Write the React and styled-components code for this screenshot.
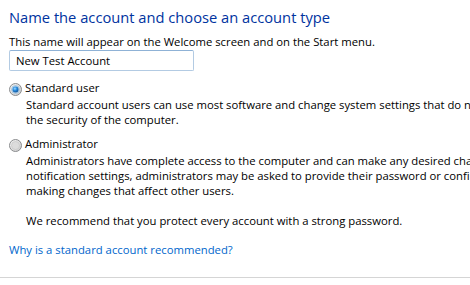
import React from "react";
import styled, { createGlobalStyle } from "styled-components";

const GlobalStyle = createGlobalStyle`
  html, body {
    margin: 0;
    padding: 0;
    background: #ffffff;
    overflow: hidden;
  }
  body {
    font-family: "Open Sans", "Noto Sans", sans-serif;
    font-size: 11.3px;
    line-height: 15px;
    color: #000000;
  }
`;

const Page = styled.div`
  width: 470px;
  height: 285px;
  overflow: hidden;
  display: flex;
  flex-direction: column;
`;

const Content = styled.div`
  display: flex;
  flex-direction: column;
  padding: 7px 0 0 9px;
`;

const Heading = styled.h1`
  margin: 0;
  font-family: "Open Sans", sans-serif;
  font-weight: 400;
  font-size: 14.7px;
  line-height: 20px;
  color: #0033a0;
  white-space: nowrap;
`;

const Prompt = styled.p`
  margin: 7px 0 1px 0;
  white-space: nowrap;
`;

const NameInput = styled.input`
  box-sizing: border-box;
  width: 185px;
  height: 21px;
  margin: 0;
  padding: 0 0 0 6px;
  border: 1px solid #b3cbe3;
  border-top-color: #8fb2d6;
  border-radius: 2px;
  font-family: "Open Sans", sans-serif;
  font-size: 11.3px;
  color: #000;
  background: #fff;
  outline: none;
`;

const Option = styled.div`
  display: flex;
  flex-direction: column;
  margin-top: ${(p) => p.$gap}px;
`;

const OptionLabel = styled.label`
  display: flex;
  align-items: flex-start;
  gap: 3px;
  white-space: nowrap;
`;

const RadioBox = styled.span`
  display: flex;
  width: 13px;
  height: 13px;
  margin-top: 3px;
  flex: none;
`;

const Description = styled.div`
  display: flex;
  flex-direction: column;
  margin: ${(p) => p.$top || 1}px 0 0 17px;
  white-space: nowrap;
`;

const Line = styled.span`
  display: block;
  height: 15px;
`;

const Link = styled.a`
  margin-top: 14px;
  color: #0066cc;
  text-decoration: none;
  white-space: nowrap;
  align-self: flex-start;
  cursor: pointer;
`;

const Divider = styled.hr`
  margin: 20px 0 0 0;
  border: none;
  border-top: 1px solid #d5d5d5;
  height: 0;
  width: 100%;
`;

function Radio({ checked, id }) {
  return (
    <RadioBox>
      <svg width="13" height="13" viewBox="0 0 13 13">
        <defs>
          <linearGradient id={`ring-${id}`} x1="0" y1="0" x2="1" y2="1">
            <stop offset="0" stopColor="#f6f6f6" />
            <stop offset="1" stopColor="#c9c9c9" />
          </linearGradient>
          <radialGradient id={`dot-${id}`} cx="0.4" cy="0.35" r="0.7">
            <stop offset="0" stopColor="#9fd8ff" />
            <stop offset="0.45" stopColor="#2b8ee0" />
            <stop offset="1" stopColor="#0a4b8f" />
          </radialGradient>
        </defs>
        <circle cx="6.5" cy="6.5" r="6" fill={`url(#ring-${id})`} stroke="#8a8c8e" strokeWidth="1" />
        {checked ? (
          <>
            <circle cx="6.5" cy="6.5" r="3.9" fill="#cfe6f7" stroke="#7aa7cf" strokeWidth="0.6" />
            <circle cx="6.5" cy="6.5" r="3" fill={`url(#dot-${id})`} />
          </>
        ) : (
          <circle cx="6.5" cy="6.5" r="4" fill="#dcdcdc" stroke="#c4c4c4" strokeWidth="0.6" />
        )}
      </svg>
    </RadioBox>
  );
}

export default function App() {
  return (
    <Page>
      <GlobalStyle />
      <Content>
        <Heading>Name the account and choose an account type</Heading>
        <Prompt>This name will appear on the Welcome screen and on the Start menu.</Prompt>
        <NameInput defaultValue="New Test Account" />
        <Option $gap={9}>
          <OptionLabel>
            <Radio checked id="std" />
            Standard user
          </OptionLabel>
          <Description>
            <Line>Standard account users can use most software and change system settings that do not affect other users or</Line>
            <Line>the security of the computer.</Line>
          </Description>
        </Option>
        <Option $gap={9}>
          <OptionLabel>
            <Radio id="adm" />
            Administrator
          </OptionLabel>
          <Description>
            <Line>Administrators have complete access to the computer and can make any desired changes. Based on</Line>
            <Line>notification settings, administrators may be asked to provide their password or confirmation before</Line>
            <Line>making changes that affect other users.</Line>
          </Description>
          <Description $top={15}>
            <Line>We recommend that you protect every account with a strong password.</Line>
          </Description>
        </Option>
        <Link>Why is a standard account recommended?</Link>
      </Content>
      <Divider />
    </Page>
  );
}
